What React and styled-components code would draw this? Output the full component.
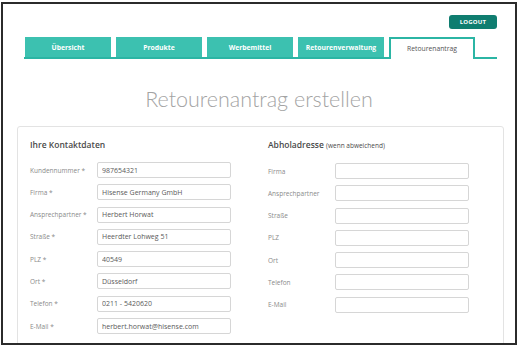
import React from 'react';
import styled, { createGlobalStyle } from 'styled-components';

const GlobalStyle = createGlobalStyle`
  html, body {
    margin: 0;
    background: #ffffff;
  }
  body {
    font-family: Lato, "Open Sans", sans-serif;
  }
`;

const tabs = ['Übersicht', 'Produkte', 'Werbemittel', 'Retourenverwaltung', 'Retourenantrag'];

const contact = [
  ['Kundennummer *', '987654321'],
  ['Firma *', 'Hisense Germany GmbH'],
  ['Ansprechpartner *', 'Herbert Horwat'],
  ['Straße *', 'Heerdter Lohweg 51'],
  ['PLZ *', '40549'],
  ['Ort *', 'Düsseldorf'],
  ['Telefon *', '0211 - 5420620'],
  ['E-Mail *', 'herbert.horwat@hisense.com'],
];

const pickup = ['Firma', 'Ansprechpartner', 'Straße', 'PLZ', 'Ort', 'Telefon', 'E-Mail'];

const App = () => {
  return (
    <>
      <GlobalStyle />
      <Frame>
        <Header>
          <LogoutButton>LOGOUT</LogoutButton>
        </Header>
        <TabBar>
          {tabs.map((t, i) => (
            <Tab key={t} active={i === tabs.length - 1}>{t}</Tab>
          ))}
        </TabBar>
        <Title>Retourenantrag erstellen</Title>
        <Panel>
          <Column>
            <Heading>Ihre Kontaktdaten</Heading>
            <Fields>
              {contact.map(([label, value]) => (
                <Row key={label}>
                  <Label>{label}</Label>
                  <Field defaultValue={value} />
                </Row>
              ))}
            </Fields>
          </Column>
          <Column>
            <Heading>Abholadresse <small>(wenn abweichend)</small></Heading>
            <Fields>
              {pickup.map((label) => (
                <Row key={label}>
                  <Label>{label}</Label>
                  <Field defaultValue="" />
                </Row>
              ))}
            </Fields>
          </Column>
        </Panel>
      </Frame>
    </>
  );
};

export default App;

const Frame = styled.div`
  box-sizing: border-box;
  width: 516px;
  height: 343px;
  margin: 2px 0 0 1px;
  border: 2px solid #2b2b2b;
  overflow: hidden;
  display: flex;
  flex-direction: column;
`;

const Header = styled.div`
  display: flex;
  justify-content: flex-end;
  padding: 11px 18px 0 0;
`;

const LogoutButton = styled.button`
  width: 48px;
  height: 14px;
  padding: 0;
  border: none;
  border-radius: 3px;
  background: #0f7d70;
  color: #ffffff;
  font-family: "Open Sans", sans-serif;
  font-size: 6px;
  font-weight: 700;
  letter-spacing: 0.2px;
`;

const TabBar = styled.nav`
  display: flex;
  gap: 5px;
  margin: 8px 18px 0 21px;
  padding-left: 1px;
  border-bottom: 2px solid #2bb5a4;
  height: 20px;
`;

const Tab = styled.div`
  box-sizing: border-box;
  width: 86px;
  height: ${(p) => (p.active ? '22px' : '20px')};
  display: flex;
  align-items: center;
  justify-content: center;
  font-family: "Open Sans", sans-serif;
  font-size: 6.8px;
  font-weight: ${(p) => (p.active ? 400 : 700)};
  color: ${(p) => (p.active ? '#555555' : '#ffffff')};
  background: ${(p) => (p.active ? '#ffffff' : '#3cc1b0')};
  border: ${(p) => (p.active ? '2px solid #2bb5a4' : 'none')};
  border-bottom: none;
  padding-bottom: ${(p) => (p.active ? '2px' : '0')};
`;

const Title = styled.h1`
  margin: 28px 0 0;
  text-align: center;
  font-family: Lato, sans-serif;
  font-weight: 300;
  font-size: 21.5px;
  line-height: 25px;
  color: #a3a3a3;
`;

const Panel = styled.section`
  flex: 1;
  display: grid;
  grid-template-columns: 238px 1fr;
  margin: 14px 11px -6px 14px;
  padding: 12px 12px 0;
  border: 1px solid #e3e3e3;
  border-radius: 3px;
`;

const Column = styled.div`
  display: flex;
  flex-direction: column;
`;

const Heading = styled.h2`
  margin: 0 0 11px;
  font-family: "Open Sans", sans-serif;
  font-size: 8.5px;
  line-height: 12px;
  font-weight: 600;
  color: #4a4a4a;

  small {
    font-size: 6.5px;
    font-weight: 400;
  }
`;

const Fields = styled.div`
  display: flex;
  flex-direction: column;
  gap: 6.3px;
`;

const Row = styled.div`
  display: grid;
  grid-template-columns: 67px 134px;
  align-items: center;
  height: 16px;
`;

const Label = styled.label`
  font-family: "Open Sans", sans-serif;
  font-size: 6.5px;
  color: #8a8a8a;
`;

const Field = styled.input`
  box-sizing: border-box;
  width: 100%;
  height: 16px;
  padding: 0 4px;
  border: 1px solid #d6d6d6;
  border-radius: 2px;
  font-family: "Open Sans", sans-serif;
  font-size: 7px;
  color: #5a5a5a;
  outline: none;
`;
